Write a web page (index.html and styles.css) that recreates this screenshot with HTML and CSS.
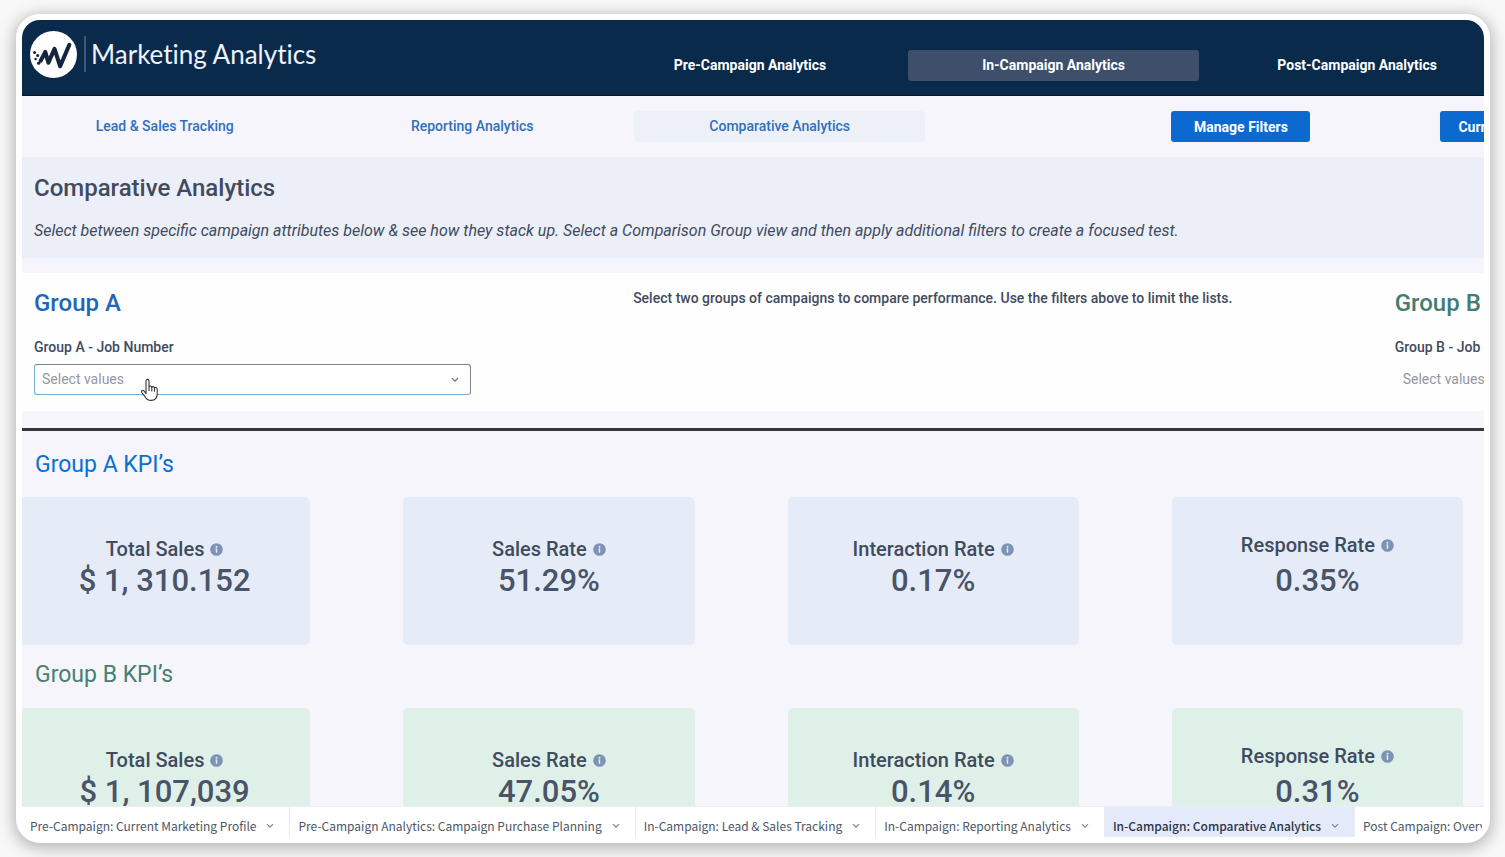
FILE: index.html
```html
<!DOCTYPE html>
<html lang="en">
<head>
<meta charset="utf-8">
<title>Marketing Analytics</title>
<link rel="stylesheet" href="styles.css">
</head>
<body>
<svg class="defs" aria-hidden="true">
  <symbol id="info" viewBox="0 0 14 14"><circle cx="7" cy="7" r="6.800" fill="currentColor"/><circle cx="7" cy="4" r="1.100" fill="#e4ebf7"/><path d="M7 6v4.600M6 6.400h1" fill="none" stroke="#e4ebf7" stroke-width="1.600"/></symbol>
  <symbol id="chevron" viewBox="0 0 8 6"><path d="M1 1.2l3 3 3-3" fill="none" stroke="currentColor" stroke-width="1.2"/></symbol>
</svg>
<div class="frame">
  <header class="topbar">
    <div class="brand">
      <svg class="logo" viewBox="0 0 46 46" aria-hidden="true">
        <circle cx="23" cy="23" r="23" fill="#fff"/>
        <path d="M10.500 29L15 20.500L18 31L24 17.500L29.500 34.500L38.500 13.500" fill="none" stroke="#15253f" stroke-width="4" stroke-linecap="round" stroke-linejoin="round"/>
        <g fill="#15253f"><circle cx="4.500" cy="21" r="1.500"/><circle cx="7.500" cy="24" r="1.500"/><circle cx="5.500" cy="27.500" r="1.200"/><circle cx="8.500" cy="31.500" r="1.600"/></g>
      </svg>
      <span class="brand-name">Marketing Analytics</span>
    </div>
    <nav class="main-nav">
      <a class="main-link" href="#pre">Pre-Campaign Analytics</a>
      <a class="main-link is-active" href="#in">In-Campaign Analytics</a>
      <a class="main-link" href="#post">Post-Campaign Analytics</a>
    </nav>
  </header>
  <main class="canvas">
    <div class="subbar">
      <nav class="sub-nav">
        <a class="sub-link" href="#lead">Lead &amp; Sales Tracking</a>
        <a class="sub-link" href="#reporting">Reporting Analytics</a>
        <a class="sub-link is-active" href="#comparative">Comparative Analytics</a>
      </nav>
      <div class="actions">
        <button class="btn" type="button">Manage Filters</button>
        <button class="btn" type="button">Current Selection</button>
      </div>
    </div>
    <section class="intro">
      <h1 class="intro-title">Comparative Analytics</h1>
      <p class="intro-text">Select between specific campaign attributes below &amp; see how they stack up. Select a Comparison Group view and then apply additional filters to create a focused test.</p>
    </section>
    <section class="groups">
      <div class="group">
        <h2 class="group-title">Group A</h2>
        <label class="group-label" for="job-a">Group A - Job Number</label>
        <div class="picker">
          <select class="picker-select is-focused" id="job-a"><option>Select values</option></select>
          <svg class="picker-arrow" aria-hidden="true"><use href="#chevron"/></svg>
          <svg class="pointer" viewBox="0 0 20 24" aria-hidden="true"><path d="M6 15.500V3.200c0-2.500 3-2.500 3 0V9c.4-1.500 2.700-1.200 2.800.4.500-1.300 2.600-1 2.700.7.600-1.100 2.700-.8 2.700 1.200v4.500c0 4-2.200 6.600-6.200 6.600-3.500 0-4.700-1.400-6-3.700L1.800 14.500c-1-1.700.9-3 2.300-1.500zM9 9v3.500M11.800 9.500V13M14.500 10.300v3" fill="#fff" stroke="#333" stroke-width="1.100" stroke-linejoin="round" stroke-linecap="round"/></svg>
        </div>
      </div>
      <p class="groups-hint">Select two groups of campaigns to compare performance. Use the filters above to limit the lists.</p>
      <div class="group">
        <h2 class="group-title group-title-b">Group B</h2>
        <label class="group-label" for="job-b">Group B - Job Number</label>
        <div class="picker">
          <select class="picker-select" id="job-b"><option>Select values</option></select>
        </div>
      </div>
    </section>
    <hr class="rule">
    <section class="kpis">
      <h2 class="kpi-heading">Group A KPI’s</h2>
      <div class="kpi-grid">
        <article class="card"><h3 class="card-title">Total Sales <svg class="info"><use href="#info"/></svg></h3><p class="card-value">$ 1, 310.152</p></article>
        <article class="card"><h3 class="card-title">Sales Rate <svg class="info"><use href="#info"/></svg></h3><p class="card-value">51.29%</p></article>
        <article class="card"><h3 class="card-title">Interaction Rate <svg class="info"><use href="#info"/></svg></h3><p class="card-value">0.17%</p></article>
        <article class="card card-spaced"><h3 class="card-title">Response Rate <svg class="info"><use href="#info"/></svg></h3><p class="card-value">0.35%</p></article>
      </div>
    </section>
    <section class="kpis kpis-b">
      <h2 class="kpi-heading">Group B KPI’s</h2>
      <div class="kpi-grid">
        <article class="card"><h3 class="card-title">Total Sales <svg class="info"><use href="#info"/></svg></h3><p class="card-value">$ 1, 107,039</p></article>
        <article class="card"><h3 class="card-title">Sales Rate <svg class="info"><use href="#info"/></svg></h3><p class="card-value">47.05%</p></article>
        <article class="card"><h3 class="card-title">Interaction Rate <svg class="info"><use href="#info"/></svg></h3><p class="card-value">0.14%</p></article>
        <article class="card card-spaced"><h3 class="card-title">Response Rate <svg class="info"><use href="#info"/></svg></h3><p class="card-value">0.31%</p></article>
      </div>
    </section>
  </main>
  <nav class="tabs">
    <button class="tab" type="button">Pre-Campaign: Current Marketing Profile <svg class="tab-arrow"><use href="#chevron"/></svg></button>
    <button class="tab" type="button">Pre-Campaign Analytics: Campaign Purchase Planning <svg class="tab-arrow"><use href="#chevron"/></svg></button>
    <button class="tab" type="button">In-Campaign: Lead &amp; Sales Tracking <svg class="tab-arrow"><use href="#chevron"/></svg></button>
    <button class="tab" type="button">In-Campaign: Reporting Analytics <svg class="tab-arrow"><use href="#chevron"/></svg></button>
    <button class="tab is-active" type="button">In-Campaign: Comparative Analytics <svg class="tab-arrow"><use href="#chevron"/></svg></button>
    <button class="tab" type="button">Post Campaign: Overview <svg class="tab-arrow"><use href="#chevron"/></svg></button>
  </nav>
</div>
</body>
</html>
```

FILE: styles.css
```css
* { box-sizing: border-box; }

body {
  margin: 0;
  height: 100vh;
  padding: 14px 15px 14px 16px;
  background: #f8f8f8;
  font-family: Roboto, "Liberation Sans", sans-serif;
  color: #414b5e;
  overflow: hidden;
}

h1, h2, h3, p { margin: 0; font-weight: 500; }
a { text-decoration: none; }
button { border: 0; font: inherit; cursor: pointer; }
.defs { display: none; }

.frame {
  height: 100%;
  display: flex;
  flex-direction: column;
  border: 6px solid #fff;
  border-radius: 24px;
  background: #fff;
  overflow: hidden;
  box-shadow: 0 3px 16px 2px rgba(0, 0, 0, 0.28);
}

/* Top bar */
.topbar {
  flex: none;
  display: flex;
  height: 76px;
  background: #0a2a4b;
  border-bottom: 1px solid #10131c;
  white-space: nowrap;
}
.brand {
  flex: none;
  width: 39%;
  height: 68px;
  padding-left: 8px;
  display: flex;
  align-items: center;
  gap: 7px;
}
.logo { width: 47px; height: 47px; }
.brand-name {
  padding-left: 5px;
  border-left: 2px solid #3c5878;
  color: #edf2fb;
  font: 26px/36px Lato, sans-serif;
  font-variant-ligatures: none;
}
.main-nav {
  flex: none;
  width: 62.3%;
  padding-left: 12px;
  display: grid;
  grid-template-columns: repeat(3, 1fr);
  gap: 12px;
  align-items: start;
}
.main-link {
  margin-top: 30px;
  border-radius: 3px;
  color: #fff;
  font-size: 14px;
  font-weight: 700;
  line-height: 31px;
  text-align: center;
}
.main-link.is-active { background: #3d4f6b; }

/* Dashboard */
.canvas {
  flex: 1;
  min-height: 0;
  overflow: hidden;
  background: #f6f5fb;
}
.subbar {
  display: flex;
  height: 61px;
  align-items: center;
  white-space: nowrap;
}
.sub-nav {
  flex: none;
  width: 62%;
  margin-left: -3px;
  display: grid;
  grid-template-columns: repeat(3, 1fr);
  gap: 16px;
}
.sub-link {
  border-radius: 3px;
  color: #2f70bd;
  font-size: 14px;
  font-weight: 500;
  line-height: 31px;
  text-align: center;
}
.sub-link.is-active { background: #eef0f8; }
.actions {
  flex: none;
  width: 38%;
  padding-left: 246px;
  display: flex;
  gap: 130px;
}
.btn {
  flex: none;
  min-width: 139px;
  height: 31px;
  padding: 0 18px;
  border-radius: 3px;
  background: #0c69d0;
  color: #fff;
  font-size: 14px;
  font-weight: 700;
  line-height: 30px;
}
.intro {
  padding: 16px 12px 15px;
  background: #eceff8;
}
.intro-title { font-size: 24px; line-height: 30px; }
.intro-text {
  margin-top: 16px;
  font-size: 16px;
  font-style: italic;
  font-weight: 400;
  line-height: 24px;
  white-space: nowrap;
}
.groups {
  width: 125%;
  margin-top: 15px;
  padding: 14px 18px 16px 12px;
  display: grid;
  grid-template-columns: 24.3% 1fr 24.3%;
  background: #fefefe;
}
.group { display: flex; flex-direction: column; }
.group-title { color: #1e66b8; font-size: 24px; line-height: 32px; }
.group-title-b { color: #437c72; }
.group-label {
  margin: 18px 0 7px;
  font-size: 14px;
  font-weight: 500;
  line-height: 20px;
}
.picker { position: relative; }
.picker-select {
  width: 100%;
  height: 31px;
  padding: 0 7px 1px;
  display: block;
  appearance: none;
  border: 1px solid transparent;
  border-radius: 3px;
  background: transparent;
  color: #9297a2;
  font: 14px Roboto, sans-serif;
}
.picker-select.is-focused {
  border-color: #7d828e #7d828e #77add0 #77add0;
  background: #fff;
}
.picker-arrow {
  position: absolute;
  top: 13px;
  right: 12px;
  width: 8px;
  height: 6px;
  color: #656b77;
}
.pointer {
  position: absolute;
  top: 14px;
  left: 106px;
  width: 20px;
  height: 24px;
}
.groups-hint {
  font-size: 14px;
  line-height: 22px;
  text-align: center;
}
.rule {
  height: 3px;
  margin: 17px 0 0;
  border: 0;
  background: #35363a;
}

/* KPI cards */
.kpis { padding-top: 19px; }
.kpis-b { padding-top: 15px; }
.kpi-heading {
  padding-left: 13px;
  color: #0870d2;
  font-size: 23px;
  font-weight: 400;
  line-height: 30px;
}
.kpis-b .kpi-heading { color: #47806f; }
.kpi-grid {
  margin: 17px 21px 0 -3px;
  display: grid;
  grid-template-columns: repeat(4, 1fr);
  gap: 93px;
}
.kpis-b .kpi-grid { margin-top: 18px; }
.card {
  height: 148px;
  padding-top: 40px;
  border-radius: 5px;
  background: #e5ecf8;
  text-align: center;
}
.kpis-b .card { background: #dff0e9; }
.card-title {
  display: flex;
  align-items: center;
  justify-content: center;
  gap: 6px;
  font-size: 20px;
  line-height: 24px;
}
.info { width: 13px; height: 13px; color: #7d92b4; }
.card-value { font-size: 31px; font-weight: 500; line-height: 40px; color: #4a5468; }
.card-spaced { padding-top: 36px; }
.card-spaced .card-value { margin-top: 4px; }

/* Sheet tabs */
.tabs {
  flex: none;
  display: flex;
  height: 31px;
  background: #fff;
  overflow: hidden;
  border-top: 1px solid #edecf2;
}
.tab {
  flex: none;
  padding: 8px 15px 0 8px;
  display: flex;
  align-items: center;
  gap: 10px;
  border-right: 1px solid #e9e9ee;
  background: #fff;
  color: #4d5664;
  font: 12px/20px "Noto Sans CJK SC", sans-serif;
  white-space: nowrap;
}
.tab.is-active { background: #e5eafb; color: #2b3648; font-weight: 500; }
.tab-arrow { width: 8px; height: 6px; color: #7d8490; }
```
